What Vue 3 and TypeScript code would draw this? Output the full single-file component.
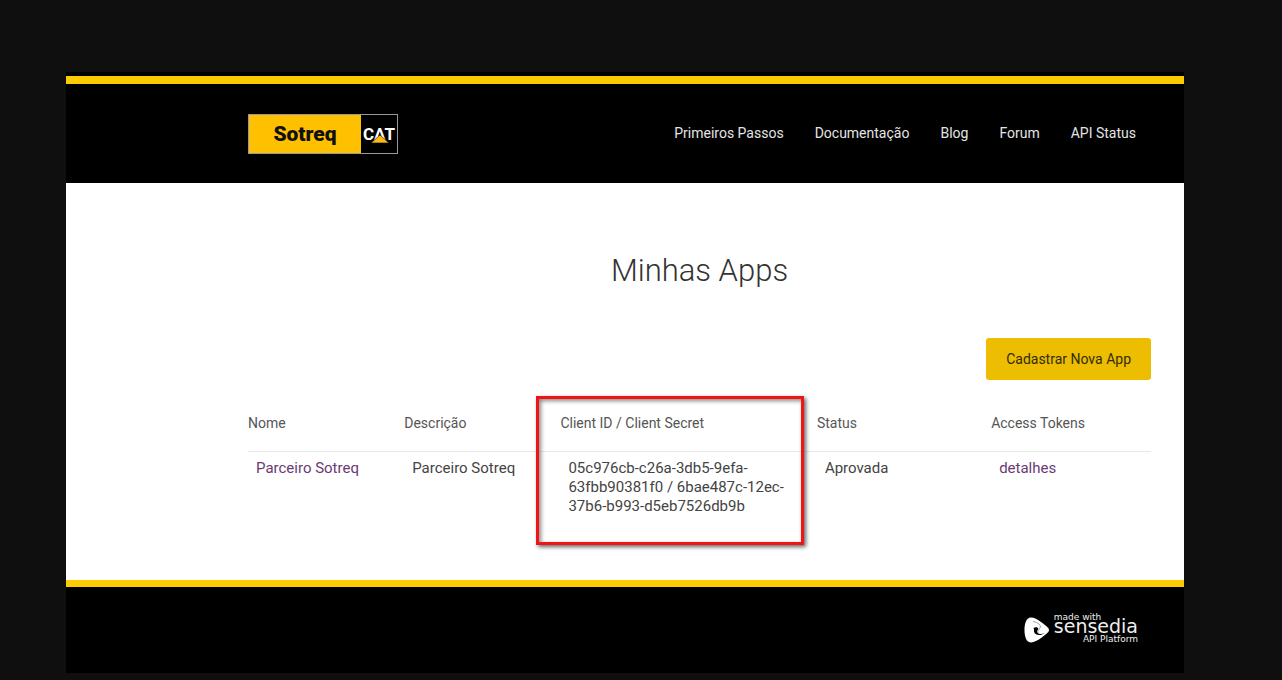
<script setup lang="ts">
interface PortalApp {
  name: string
  description: string
  credentials: string
  status: string
}

const navItems: string[] = ['Primeiros Passos', 'Documentação', 'Blog', 'Forum', 'API Status']

const apps: PortalApp[] = [
  {
    name: 'Parceiro Sotreq',
    description: 'Parceiro Sotreq',
    credentials: '05c976cb-c26a-3db5-9efa-63fbb90381f0 / 6bae487c-12ec-37b6-b993-d5eb7526db9b',
    status: 'Aprovada',
  },
]
</script>

<template>
  <div class="portal">
    <header class="header">
      <a class="logo" href="#" aria-label="Sotreq CAT">
        <span class="logo-name">Sotreq</span>
        <span class="logo-cat">
          <span>CAT</span>
          <svg class="logo-peak" viewBox="0 0 18 8" aria-hidden="true">
            <path d="M0 8 L9 0 L18 8 Z" fill="#fdb913" stroke="#000" stroke-width="0.6" />
          </svg>
        </span>
      </a>
      <nav class="nav">
        <a v-for="item in navItems" :key="item" href="#">{{ item }}</a>
      </nav>
    </header>

    <main class="main">
      <h1>Minhas Apps</h1>
      <div class="actions">
        <button type="button">Cadastrar Nova App</button>
      </div>
      <table>
        <colgroup>
          <col class="col-name" />
          <col class="col-description" />
          <col class="col-client" />
          <col class="col-status" />
          <col />
        </colgroup>
        <thead>
          <tr>
            <th scope="col">Nome</th>
            <th scope="col">Descrição</th>
            <th scope="col" class="client">
              Client ID / Client Secret
              <span class="highlight" aria-hidden="true"></span>
            </th>
            <th scope="col">Status</th>
            <th scope="col">Access Tokens</th>
          </tr>
        </thead>
        <tbody>
          <tr v-for="app in apps" :key="app.name">
            <td><a href="#">{{ app.name }}</a></td>
            <td>{{ app.description }}</td>
            <td>{{ app.credentials }}</td>
            <td>{{ app.status }}</td>
            <td><a href="#">detalhes</a></td>
          </tr>
        </tbody>
      </table>
    </main>

    <footer class="footer">
      <a class="sensedia" href="#">
        <svg class="sensedia-mark" viewBox="0 0 26 26" aria-hidden="true">
          <path
            d="M5 1 C8 -0.5 13 2 17 5 C21 8 25 10.5 25 13 C25 15.5 21 18 17 21 C13 24 8 26.500 5 25 C1.500 23.500 0.500 18 0.500 13 C0.500 8 1.500 2.500 5 1 Z"
            fill="#fff"
          />
          <path
            d="M9.500 11 C11 9.500 14.500 10 14.200 12 C14 13 12.500 14 13.500 15.500 C15 17.500 18 17.500 20.500 16 C17 19 11.500 18.500 10.300 15.500 C9.500 13.500 10.500 12.500 9.500 11 Z"
            fill="#000"
          />
          <path d="M9 4.500 C14.500 5.500 17.500 8.500 16 11 C15 12.800 13.200 13.500 14 15.500" fill="none" stroke="#888" stroke-width="0.8" />
        </svg>
        <span class="sensedia-text">
          <span class="made">made with</span>
          <span class="brand">sensedia</span>
          <span class="platform">API Platform</span>
        </span>
      </a>
    </footer>
  </div>
</template>

<style>
body {
  margin: 0;
  background: #0f0f0f;
}
</style>

<style scoped>
.portal {
  margin: 72px 98px 7px 66px;
  background: #fff;
  color: #444;
  font-family: Roboto, "Liberation Sans", sans-serif;
  font-size: 14px;
  line-height: 19px;
}

a {
  text-decoration: none;
}

.header {
  display: flex;
  align-items: center;
  justify-content: space-between;
  box-sizing: border-box;
  height: 111px;
  padding: 12px 48px 0 182px;
  background: linear-gradient(#000 4px, #fccb00 4px, #fccb00 12px, #000 12px);
}

.logo {
  display: flex;
  box-sizing: border-box;
  width: 150px;
  height: 40px;
  border: 1px solid #999;
}

.logo-name {
  flex: 1;
  background: #ffc000;
  color: #111;
  font-size: 21px;
  font-weight: 900;
  line-height: 38px;
  text-align: center;
}

.logo-cat {
  position: relative;
  width: 36px;
  background: #000;
  color: #fff;
  font-size: 17px;
  font-weight: 700;
  line-height: 38px;
  text-align: center;
}

.logo-peak {
  position: absolute;
  left: 10px;
  bottom: 10px;
  width: 18px;
  height: 8px;
}

.nav {
  display: flex;
  gap: 31px;
}

.nav a {
  color: #e4e4e4;
}

.main {
  padding: 68px 33px 35px 182px;
}

h1 {
  margin: 0;
  color: #333;
  font-size: 31px;
  font-weight: 300;
  line-height: 40px;
  text-align: center;
}

.actions {
  display: flex;
  justify-content: flex-end;
  margin-top: 47px;
}

button {
  height: 42px;
  padding: 0 20px;
  border: 0;
  border-radius: 3px;
  background: #ecbd00;
  color: #332b08;
  font: inherit;
}

table {
  width: 100%;
  margin-top: 23px;
  border-collapse: collapse;
  table-layout: fixed;
}

.col-name,
.col-description {
  width: 17.3%;
}

.col-client {
  width: 28.4%;
}

.col-status {
  width: 19.3%;
}

th {
  padding: 11px 0 18px;
  border-bottom: 1px solid #e8e8e8;
  color: #555;
  font-size: 14px;
  font-weight: 400;
  text-align: left;
}

td {
  padding: 7px 16px 29px 8px;
  font-size: 15px;
  vertical-align: top;
}

td a {
  color: #6b3a75;
}

.client {
  position: relative;
}

.highlight {
  position: absolute;
  top: -7px;
  right: 13px;
  left: -24px;
  height: 143px;
  border: 3px solid #f01414;
  box-shadow: 2px 2px 4px #666, inset 2px 2px 4px #888;
}

.footer {
  display: flex;
  justify-content: flex-end;
  padding: 27px 46px 27px;
  border-top: 7px solid #fccb00;
  background: #000;
}

.sensedia {
  display: flex;
  align-items: center;
  gap: 4px;
  color: #eee;
}

.sensedia-mark {
  width: 26px;
  height: 26px;
}

.sensedia-text {
  display: flex;
  flex-direction: column;
  font-family: "DejaVu Sans", sans-serif;
  font-size: 9px;
}

.made {
  line-height: 6px;
}

.brand {
  font-size: 19px;
  line-height: 12px;
}

.platform {
  align-self: flex-end;
  line-height: 14px;
}
</style>
